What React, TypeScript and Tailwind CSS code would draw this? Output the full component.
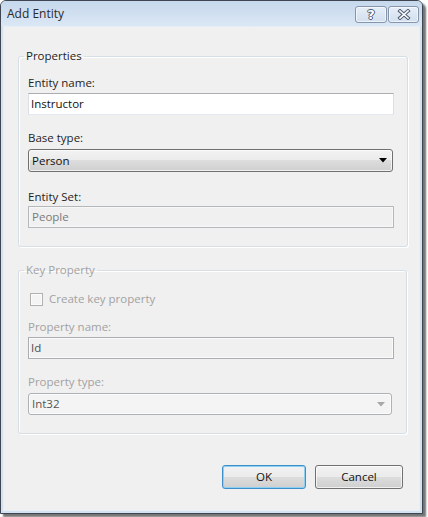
import React from "react";

const font = "font-['Open_Sans',sans-serif] text-[11.5px]";

function Label({ children, disabled }: { children: React.ReactNode; disabled?: boolean }) {
  return (
    <div className={`h-[16px] leading-[16px] ${disabled ? "text-[#a2a2a2]" : "text-[#1e1e1e]"}`}>{children}</div>
  );
}

export default function App() {
  return (
    <div className={`w-[428px] h-[517px] bg-white ${font}`}>
      <div className="w-[423px] h-[514px] rounded-t-[6px] border border-[#3d4651] bg-[#d4e1ef] shadow-[3px_3px_2px_rgba(0,0,0,0.55)] flex flex-col overflow-hidden">
        {/* Title bar */}
        <div className="h-[25px] flex items-center pl-[6px] pr-[3px] bg-gradient-to-b from-[#c6d8ec] to-[#dbe7f4]">
          <div className="flex-1 text-[#2a2a2a] text-[12px] leading-[16px]">Add Entity</div>
          <div className="flex gap-[1px] items-start pt-[2px] self-start mt-[3px]">
            <div className="w-[32px] h-[17px] rounded-[3px] border border-[#8595ab] bg-gradient-to-b from-[#e6eef8] to-[#d3dfee] shadow-[inset_0_0_0_1px_rgba(255,255,255,0.6)] flex items-center justify-center">
              <span className="text-[13px] font-bold leading-none text-white [text-shadow:1px_0_0_#4b5b70,-1px_0_0_#4b5b70,0_1px_0_#4b5b70,0_-1px_0_#4b5b70] font-['DejaVu_Sans',sans-serif]">?</span>
            </div>
            <div className="w-[31px] h-[17px] rounded-[3px] border border-[#8595ab] bg-gradient-to-b from-[#e6eef8] to-[#d3dfee] shadow-[inset_0_0_0_1px_rgba(255,255,255,0.6)] flex items-center justify-center">
              <svg width="14" height="11" viewBox="0 0 14 11">
                <path d="M3 2 L11 9 M11 2 L3 9" stroke="#4b5b70" strokeWidth="3.6" strokeLinecap="square" />
                <path d="M3 2 L11 9 M11 2 L3 9" stroke="#ffffff" strokeWidth="1.6" strokeLinecap="square" />
              </svg>
            </div>
          </div>
        </div>
        {/* Client */}
        <div className="flex-1 mx-[2px] mb-[2px] border border-[#e6eef6] bg-[#f0f0f0] flex flex-col">
          {/* Properties */}
          <fieldset className="mt-[21px] ml-[14px] w-[390px] rounded-[3px] border border-[#d5dfe5] shadow-[inset_1px_1px_0_#ffffff,1px_1px_0_#ffffff] px-[9px] pt-[11px] pb-[18px]">
            <legend className="ml-[-4px] px-[2px] h-[16px] leading-[16px] text-[#1e1e1e]">Properties</legend>
            <Label>Entity name:</Label>
            <div className="mt-[2px] w-[366px] h-[22px] bg-white border border-[#dbdfe6] border-t-[#abadb3] border-b-[#e3e9ef] pl-[2px] flex items-center text-[#111]">
              Instructor
            </div>
            <div className="mt-[15px]"><Label>Base type:</Label></div>
            <div className="mt-[3px] w-[365px] h-[23px] rounded-[3px] border border-[#707070] bg-[linear-gradient(#f2f2f2,#ebebeb_50%,#dddddd_50%,#cfcfcf)] shadow-[inset_0_0_0_1px_rgba(255,255,255,0.7)] pl-[3px] pr-[5px] flex items-center justify-between text-[#111]">
              <span>Person</span>
              <svg width="8" height="5" viewBox="0 0 8 5"><path d="M0 0 H8 L4 4.5 Z" fill="#000" /></svg>
            </div>
            <div className="mt-[17px]"><Label>Entity Set:</Label></div>
            <div className="mt-[1px] w-[366px] h-[22px] border border-[#b5b8bb] shadow-[inset_0_0_0_1px_#f7f7f7] pl-[3px] flex items-center text-[#7a7a7a]">
              People
            </div>
          </fieldset>
          {/* Key Property */}
          <fieldset className="mt-[15px] ml-[14px] w-[389px] rounded-[3px] border border-[#d5dfe5] shadow-[inset_1px_1px_0_#ffffff,1px_1px_0_#ffffff] px-[9px] pt-[13px] pb-[18px]">
            <legend className="ml-[-4px] px-[2px] h-[16px] leading-[16px] text-[#a2a2a2]">Key Property</legend>
            <div className="h-[16px] flex items-center">
              <div className="ml-[2px] w-[13px] h-[13px] border border-[#b1b1b1] bg-[#f4f4f4] shadow-[inset_0_0_0_1px_#fbfbfb]" />
              <span className="ml-[6px] text-[#a2a2a2] leading-[16px]">Create key property</span>
            </div>
            <div className="mt-[12px]"><Label disabled>Property name:</Label></div>
            <div className="mt-[2px] w-[366px] h-[22px] border border-[#abadb3] shadow-[inset_0_0_0_1px_#fafafa] pl-[2px] flex items-center text-[#4d4d4d]">
              Id
            </div>
            <div className="mt-[15px]"><Label disabled>Property type:</Label></div>
            <div className="mt-[3px] w-[364px] h-[22px] rounded-[3px] border border-[#adb2b5] bg-[#f4f4f4] shadow-[inset_0_0_0_1px_#fcfcfc] pl-[3px] pr-[6px] flex items-center justify-between text-[#555]">
              <span>Int32</span>
              <svg width="8" height="5" viewBox="0 0 8 5"><path d="M0 0 H8 L4 4.5 Z" fill="#a8a8a8" /></svg>
            </div>
          </fieldset>
          {/* Buttons */}
          <div className="mt-[31px] mr-[16px] flex justify-end gap-[9px]">
            <button className="w-[84px] h-[24px] rounded-[3px] border border-[#3c8fc8] bg-[linear-gradient(#f2f2f2,#ebebeb_50%,#dddddd_50%,#cfcfcf)] shadow-[inset_0_0_0_1px_#8ed0f4] text-[#111] leading-none">
              OK
            </button>
            <button className="w-[88px] h-[24px] rounded-[3px] border border-[#707070] bg-[linear-gradient(#f2f2f2,#ebebeb_50%,#dddddd_50%,#cfcfcf)] shadow-[inset_0_0_0_1px_rgba(255,255,255,0.7)] text-[#111] leading-none">
              Cancel
            </button>
          </div>
        </div>
      </div>
    </div>
  );
}
